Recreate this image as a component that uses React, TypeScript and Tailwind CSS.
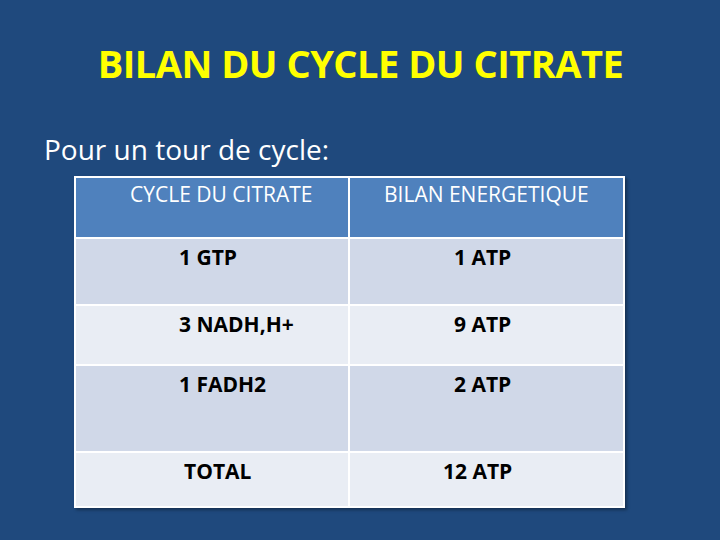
import React from 'react';

const rows = [
  { left: '1 GTP', right: '1 ATP', h: 'h-[65px]', bg: 'bg-[#d0d8e8]', lp: 'pl-[103px]', rp: 'pl-[104px]' },
  { left: '3 NADH,H+', right: '9 ATP', h: 'h-[58px]', bg: 'bg-[#e9edf4]', lp: 'pl-[103px]', rp: 'pl-[104px]' },
  { left: '1 FADH2', right: '2 ATP', h: 'h-[85px]', bg: 'bg-[#d0d8e8]', lp: 'pl-[103px]', rp: 'pl-[104px]' },
  { left: 'TOTAL', right: '12 ATP', h: 'h-[53px]', bg: 'bg-[#e9edf4]', lp: 'pl-[108px]', rp: 'pl-[93px]' },
];

export default function App() {
  return (
    <div
      className="w-[720px] h-[540px] bg-[#1f497d] flex flex-col overflow-hidden"
      style={{ fontFamily: '"Open Sans", "Noto Sans", sans-serif' }}
    >
      {/* Title */}
      <h1 className="mt-[40px] text-center text-[#ffff00] font-bold text-[38px] leading-[46px] tracking-[-0.5px] pl-[1px]">
        BILAN DU CYCLE DU CITRATE
      </h1>

      <p className="mt-[45px] pl-[44px] text-white text-[28px] leading-[36px]">Pour un tour de cycle:</p>

      {/* Table */}
      <div className="mt-[9px] ml-[74px] w-[551px] border-2 border-white bg-white flex flex-col gap-[2px] shadow-[2px_2px_3px_rgba(0,0,0,0.35)]">
        <div className="flex gap-[2px] h-[59px] text-white text-[21px] leading-[28px]">
          <div className="w-[272px] bg-[#4f81bd] pl-[54px] pt-[2px]">CYCLE DU CITRATE</div>
          <div className="flex-1 bg-[#4f81bd] pl-[34px] pt-[2px]">BILAN ENERGETIQUE</div>
        </div>
        {rows.map((r) => (
          <div key={r.left} className={`flex gap-[2px] ${r.h} text-black font-bold text-[21px] leading-[28px]`}>
            <div className={`w-[272px] ${r.bg} ${r.lp} pt-[4px]`}>{r.left}</div>
            <div className={`flex-1 ${r.bg} ${r.rp} pt-[4px]`}>{r.right}</div>
          </div>
        ))}
      </div>
    </div>
  );
}
